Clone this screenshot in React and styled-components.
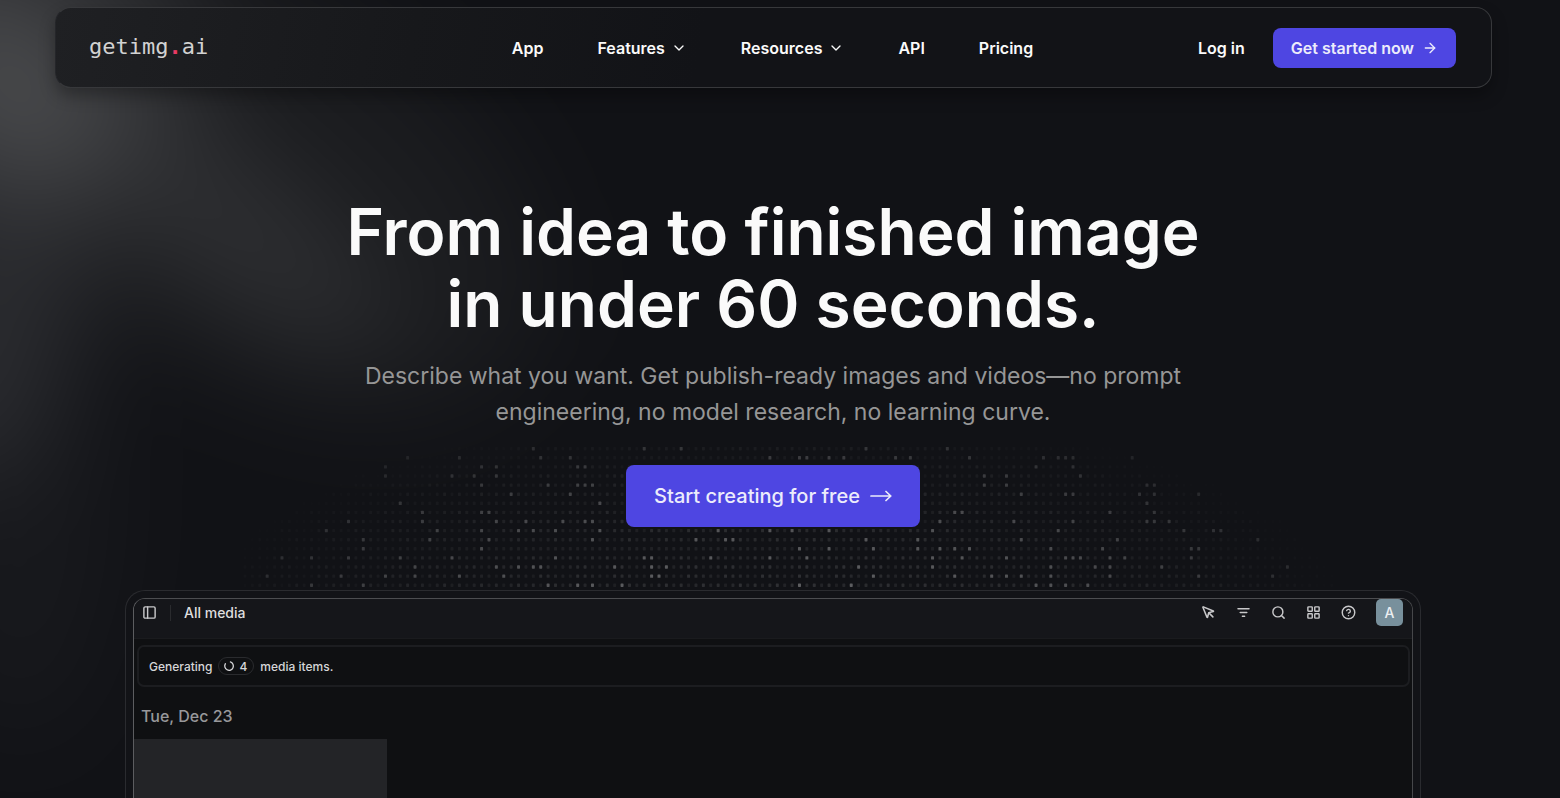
import React from "react";
import styled, { createGlobalStyle } from "styled-components";
import {
  ArrowRight,
  ChevronDown,
  CircleHelp,
  LayoutGrid,
  MousePointer,
  PanelLeft,
  Search,
} from "lucide-react";

const GlobalStyle = createGlobalStyle`
  * {
    box-sizing: border-box;
  }

  body {
    margin: 0;
    background: #111216;
    color: #fafafa;
    font-family: Inter, "Liberation Sans", sans-serif;
  }

  a {
    color: inherit;
    text-decoration: none;
  }

  button {
    font: inherit;
    color: inherit;
    border: none;
    background: none;
    padding: 0;
    cursor: pointer;
  }
`;

const Page = styled.div`
  position: relative;
  display: flex;
  flex-direction: column;
  height: 100vh;
  overflow: hidden;
  padding: 7px 14px 0 0;
  background: #111216;
`;

const Glow = styled.svg`
  position: absolute;
  top: 0;
  left: 0;
  pointer-events: none;
`;

const Header = styled.header`
  position: relative;
  display: grid;
  grid-template-columns: 1fr auto 1fr;
  align-items: center;
  height: 81px;
  margin: 0 54px 0 55px;
  padding: 0 35px 0 33px;
  border: 1px solid #37383b;
  border-left-color: #25262a;
  border-radius: 16px;
  background: linear-gradient(100deg, #1f2023, #17181b 25%, #121317 45%);
  box-shadow: 0 8px 16px rgba(0, 0, 0, 0.3);
  font-size: 16px;
  font-weight: 600;
  flex-shrink: 0;
`;

const Logo = styled.a`
  padding-bottom: 3px;
  color: #d2d2d2;
  font-family: "DejaVu Sans Mono", monospace;
  font-size: 22px;
  font-weight: 400;

  span {
    color: #e83a64;
    font-weight: 700;
  }
`;

const Nav = styled.nav`
  display: flex;
  align-items: center;
  gap: 54px;
`;

const NavItem = styled.a`
  display: flex;
  align-items: center;
  gap: 6px;
`;

const NavMenu = styled.button`
  display: flex;
  align-items: center;
  gap: 6px;
`;

const Account = styled.div`
  display: flex;
  justify-content: flex-end;
  align-items: center;
  gap: 28px;
`;

const PrimaryLink = styled.a`
  display: flex;
  align-items: center;
  border-radius: 8px;
  background: #4e46e2;
  color: #ececfb;
  white-space: nowrap;
  height: ${(p) => (p.$large ? "62px" : "40px")};
  padding: 0 ${(p) => (p.$large ? "28px" : "18px")};
  gap: ${(p) => (p.$large ? "10px" : "8px")};
  font-size: ${(p) => (p.$large ? "20px" : "16px")};
  font-weight: ${(p) => (p.$large ? 500 : 600)};
`;

const Hero = styled.main`
  position: relative;
  display: flex;
  flex: 1;
  flex-direction: column;
  align-items: center;
  min-height: 0;
  padding-top: 108px;
`;

const Title = styled.h1`
  margin: 0;
  font-size: 64px;
  font-weight: 600;
  line-height: 72px;
  text-align: center;
`;

const Subtitle = styled.p`
  max-width: 840px;
  margin: 18px 0 35px;
  color: #969696;
  font-size: 23px;
  line-height: 36px;
  text-align: center;
`;

// sits behind the call to action and the top edge of the preview
const Dots = styled.svg`
  position: absolute;
  top: 355px;
  left: 50%;
  transform: translateX(-50%);
  pointer-events: none;
`;

const Action = styled.div`
  position: relative;
  margin-bottom: 63px;
`;

const Frame = styled.section`
  position: relative;
  display: flex;
  flex: 1;
  width: calc(100% - 80px);
  max-width: 1296px;
  min-height: 0;
  padding: 7px 7px 0;
  border: 1px solid #2a2b2f;
  border-bottom: none;
  border-radius: 20px 20px 0 0;
  background: #121317;
`;

const Preview = styled.div`
  flex: 1;
  overflow: hidden;
  border: 1px solid #5c5d60;
  border-top-color: #4c4d50;
  border-right-color: #46474a;
  border-bottom: none;
  border-radius: 12px 12px 0 0;
  background: #0f1012;
`;

const Toolbar = styled.div`
  display: flex;
  align-items: flex-start;
  justify-content: space-between;
  height: 40px;
  padding: 0 9px 0 8px;
  background: #15161a;
  border-bottom: 1px solid #1a1b1e;
`;

const ToolGroup = styled.div`
  display: flex;
  align-items: center;
  height: 27px;
  gap: ${(p) => p.$gap};
`;

const Divider = styled.span`
  width: 1px;
  height: 16px;
  background: #2a2b2e;
`;

const ViewName = styled.h2`
  margin: 0;
  color: #dededf;
  font-size: 14px;
  font-weight: 500;
`;

const ToolButton = styled.button`
  display: flex;
  color: #c8c8ca;
`;

const Avatar = styled.button`
  width: 27px;
  height: 27px;
  border-radius: 5px;
  background: #78909c;
  color: #eceff1;
  font-size: 14px;
  font-weight: 500;
`;

const Status = styled.div`
  display: flex;
  align-items: center;
  gap: 6px;
  height: 42px;
  margin: 6px 2px 0 3px;
  padding: 0 10px;
  border: 2px solid #1c1d20;
  border-radius: 7px;
  color: #d6d6d8;
  font-size: 12px;
  font-weight: 500;
`;

const Count = styled.span`
  display: flex;
  align-items: center;
  gap: 4px;
  height: 18px;
  padding: 0 6px 0 4px;
  border: 1px solid #2a2b2e;
  border-radius: 9px;
`;

const DateLabel = styled.h3`
  margin: 17px 0 11px 7px;
  color: #98989b;
  font-size: 16px;
  font-weight: 500;
  line-height: 24px;
`;

const Placeholder = styled.div`
  width: 253px;
  height: 253px;
  background: #232427;
`;

const COLS = 148;
const ROWS = 16;
const PITCH_X = 7.393;
const PITCH_Y = 9.1;

// columns that glow in each row
const LIT = [
  [39, 54, 59, 84, 95],
  [22, 29, 40, 44, 71, 75, 76, 79, 81, 88, 90, 98, 108, 110, 111, 112, 120],
  [19, 32, 34, 45, 46, 107, 112],
  [19, 28, 31, 34, 100, 103, 113],
  [32, 41, 45, 46, 47, 100, 103, 122, 123],
  [36, 44, 105, 111, 112, 121, 123, 129],
  [21, 48, 122],
  [24, 32, 33, 96, 97, 117, 123],
  [14, 24, 34, 38, 43, 46, 47, 94, 104, 112, 122, 123, 125],
  [11, 26, 32, 37, 39, 42, 48, 64, 71, 74, 79, 93, 110, 127, 131, 132],
  [16, 25, 33, 47, 61, 65, 66, 84, 91, 105, 118, 137],
  [16, 32, 75, 79, 85, 91, 94, 96, 98, 109, 116, 128, 129],
  [5, 9, 14, 21, 28, 42, 54, 55, 63, 71, 76, 93, 97, 103, 111, 112, 113, 117, 119, 128],
  [23, 34, 37, 39, 40, 50, 55, 57, 83, 93, 109, 115, 117, 124, 141],
  [3, 13, 19, 23, 29, 35, 55, 56, 85, 96, 101, 103, 105, 109, 117, 129, 139],
  [9, 16, 41, 45, 47, 51, 75, 82, 107, 109, 111, 114],
];

function dotOpacity(col, row) {
  const dx = (col - 71.4) / 80;
  const dy = (ROWS + 3 - row) / 24;
  const fade = Math.max(0, 1 - dx * dx - dy * dy);
  if (LIT[row].includes(col)) {
    return 0.06 + 0.27 * fade;
  }
  const noise = ((col * 37 + row * 71 + col * row * 13) % 5) / 4;
  return fade * (0.06 + 0.07 * noise);
}

function DotField() {
  const dots = [];
  for (let row = 0; row < ROWS; row++) {
    for (let col = 0; col < COLS; col++) {
      dots.push(
        <rect
          key={`${row}-${col}`}
          x={col * PITCH_X + 1}
          y={row * PITCH_Y + 4}
          width="3"
          height="3.4"
          rx="0.6"
          fill="#fff"
          fillOpacity={dotOpacity(col, row)}
        />
      );
    }
  }
  return (
    <Dots width="1061" height="152" aria-hidden="true" overflow="visible">
      {dots}
    </Dots>
  );
}

const LightBeam = () => (
  <Glow width="900" height="800" aria-hidden="true">
    <defs>
      <filter
        id="soft"
        filterUnits="userSpaceOnUse"
        x="-400"
        y="-400"
        width="1500"
        height="1600"
        colorInterpolationFilters="sRGB"
      >
        <feGaussianBlur stdDeviation="52" />
      </filter>
    </defs>
    <g filter="url(#soft)">
      <rect x="-400" y="-400" width="1500" height="1600" fill="#111216" />
      <g fill="#f4f6f0">
        <ellipse cx="-20" cy="40" rx="220" ry="150" opacity="0.085" />
        <ellipse cx="170" cy="180" rx="270" ry="75" opacity="0.085" transform="rotate(36 170 180)" />
        <ellipse cx="-40" cy="210" rx="120" ry="280" opacity="0.09" />
        <ellipse cx="240" cy="170" rx="340" ry="190" opacity="0.045" transform="rotate(32 240 170)" />
        <ellipse cx="20" cy="480" rx="90" ry="260" opacity="0.03" />
      </g>
    </g>
  </Glow>
);

const LongArrow = () => (
  <svg width="22" height="12" viewBox="0 0 22 12" fill="none" stroke="currentColor" strokeWidth="1.7" strokeLinecap="round" strokeLinejoin="round" aria-hidden="true">
    <path d="M1 6h19.5M16 1.5 20.8 6 16 10.5" />
  </svg>
);

const FilterIcon = () => (
  <svg width="15" height="15" viewBox="0 0 15 15" fill="none" stroke="currentColor" strokeWidth="1.5" strokeLinecap="round" aria-hidden="true">
    <path d="M2 3.8h11M4.2 7.5h6.6M6.4 11.2h2.2" />
  </svg>
);

const SpinnerIcon = () => (
  <svg width="12" height="12" viewBox="0 0 12 12" fill="none" stroke="currentColor" strokeWidth="1.3" strokeLinecap="round" aria-hidden="true">
    <path d="M7.4 1.9a4.3 4.3 0 1 1-5 1.8" />
  </svg>
);

const App = () => {
  return (
    <>
      <GlobalStyle />
      <Page>
        <LightBeam />
        <Header>
          <Logo href="#">
            getimg<span>.</span>ai
          </Logo>
          <Nav>
            <NavItem href="#app">App</NavItem>
            <NavMenu type="button">
              Features <ChevronDown size={16} />
            </NavMenu>
            <NavMenu type="button">
              Resources <ChevronDown size={16} />
            </NavMenu>
            <NavItem href="#api">API</NavItem>
            <NavItem href="#pricing">Pricing</NavItem>
          </Nav>
          <Account>
            <NavItem href="#login">Log in</NavItem>
            <PrimaryLink href="#signup">
              Get started now <ArrowRight size={16} />
            </PrimaryLink>
          </Account>
        </Header>

        <Hero>
          <DotField />
          <Title>
            From idea to finished image
            <br />
            in under 60 seconds.
          </Title>
          <Subtitle>
            Describe what you want. Get publish-ready images and videos—no
            prompt engineering, no model research, no learning curve.
          </Subtitle>
          <Action>
            <PrimaryLink $large href="#signup">
              Start creating for free <LongArrow />
            </PrimaryLink>
          </Action>

          <Frame>
            <Preview>
              <Toolbar>
                <ToolGroup $gap="13px">
                  <ToolButton type="button" aria-label="Toggle sidebar">
                    <PanelLeft size={15} strokeWidth={2.3} />
                  </ToolButton>
                  <Divider />
                  <ViewName>All media</ViewName>
                </ToolGroup>
                <ToolGroup $gap="20px">
                  <ToolButton type="button" aria-label="Select">
                    <MousePointer size={15} strokeWidth={2.5} />
                  </ToolButton>
                  <ToolButton type="button" aria-label="Filter">
                    <FilterIcon />
                  </ToolButton>
                  <ToolButton type="button" aria-label="Search">
                    <Search size={15} strokeWidth={2.3} />
                  </ToolButton>
                  <ToolButton type="button" aria-label="Layout">
                    <LayoutGrid size={15} strokeWidth={2.3} />
                  </ToolButton>
                  <ToolButton type="button" aria-label="Help">
                    <CircleHelp size={15} strokeWidth={2.3} />
                  </ToolButton>
                  <Avatar type="button">A</Avatar>
                </ToolGroup>
              </Toolbar>
              <Status>
                Generating
                <Count>
                  <SpinnerIcon />4
                </Count>
                media items.
              </Status>
              <DateLabel>Tue, Dec 23</DateLabel>
              <Placeholder />
            </Preview>
          </Frame>
        </Hero>
      </Page>
    </>
  );
};

export default App;
